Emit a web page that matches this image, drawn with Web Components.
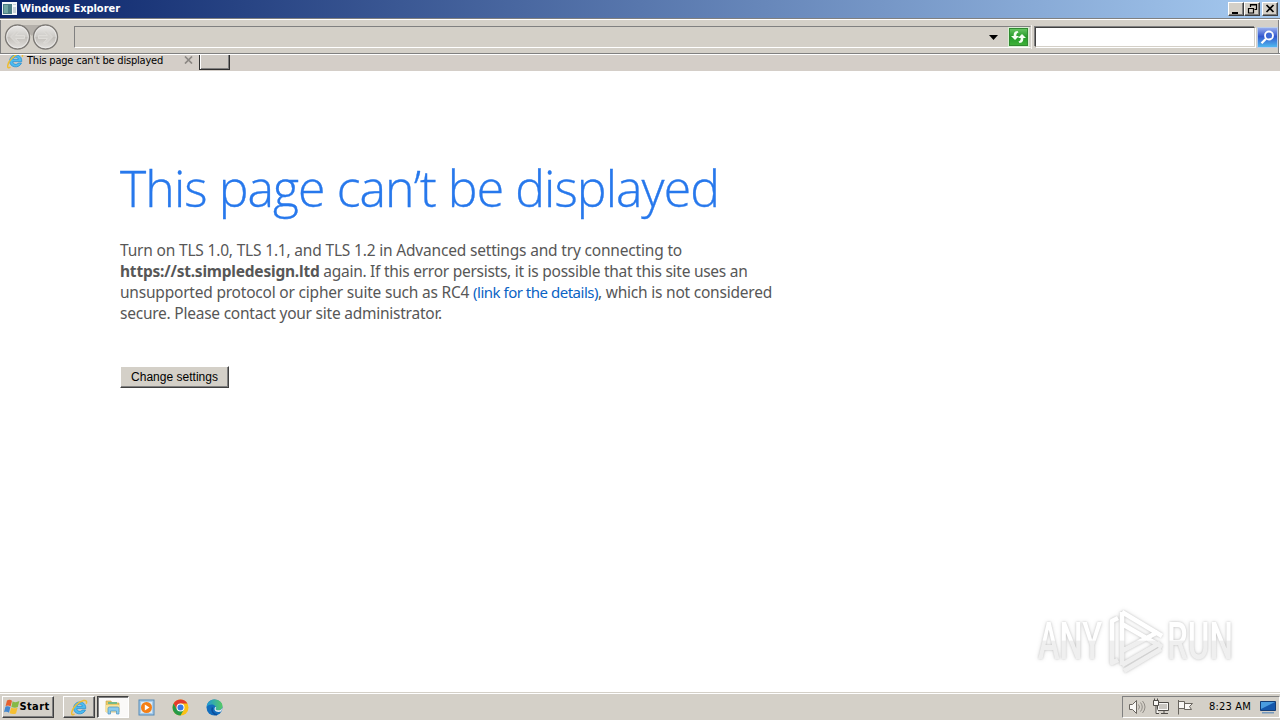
<!DOCTYPE html>
<html lang="en">
<head>
<meta charset="utf-8">
<title>Windows Explorer</title>
<style>
  body {
    margin: 0;
    width: 1280px;
    height: 720px;
    overflow: hidden;
    background: #fff;
    font-family: "DejaVu Sans Condensed", "DejaVu Sans", sans-serif;
  }
</style>
</head>
<body>
<desktop-screen>
  <title-bar slot="top">Windows Explorer</title-bar>
  <nav-bar slot="top"></nav-bar>
  <tab-strip slot="top">This page can't be displayed</tab-strip>
  <error-page></error-page>
  <run-watermark slot="overlay"></run-watermark>
  <task-bar slot="bottom"></task-bar>
</desktop-screen>

<script>
const ieIcon = /*html*/ `
  <svg width="17" height="17" viewBox="0 0 17 17">
    <path d="M14.8 9.600H5.800c.3 3 4 3.700 5.400 1.400h3.300C12 17.200 2.300 15.500 2.600 9 2.900 1 15.200.6 14.800 9.600Z M5.900 7.300h5.400c-.5-2.900-4.800-2.900-5.400 0Z" fill="#4cbcf0" stroke="#2389cf" stroke-width=".7" fill-rule="evenodd"/>
    <path d="M3.500 15.200C-1 17.800.2 11 4.800 6.200 9.600 1.200 17.400-.8 15.200 4.800" fill="none" stroke="#efbd32" stroke-width="1.500"/>
  </svg>`;

class BaseElement extends HTMLElement {
  constructor() {
    super();
    this.attachShadow({ mode: 'open' });
  }

  connectedCallback() {
    const template = document.createElement('template');
    template.innerHTML = `<style>${this.getStyle()}</style>${this.getTemplate()}`;
    this.shadowRoot.replaceChildren(template.content.cloneNode(true));
  }
}

class DesktopScreen extends BaseElement {
  getStyle() {
    return `
      :host { display: flex; flex-direction: column; width: 1280px; height: 720px; position: relative; }
      main { flex: 1; min-height: 0; background: #fff; }
    `;
  }
  getTemplate() {
    return /*html*/ `
      <slot name="top"></slot>
      <main><slot></slot></main>
      <slot name="bottom"></slot>
      <slot name="overlay"></slot>`;
  }
}

// Spreads its text over a fixed width by adjusting the letter spacing
class FitText extends BaseElement {
  getStyle() {
    return `
      :host { display: inline-block; white-space: pre; flex: none; }
      span { display: inline-block; }
    `;
  }
  getTemplate() {
    return '<span><slot></slot></span>';
  }
  connectedCallback() {
    super.connectedCallback();
    const width = Number(this.getAttribute('width'));
    const span = this.shadowRoot.querySelector('span');
    const natural = span.getBoundingClientRect().width;
    const spacing = (width - natural) / this.textContent.length;
    span.style.letterSpacing = `${spacing}px`;
    this.style.width = `${width}px`;
  }
}

class TitleBar extends BaseElement {
  getStyle() {
    return `
      :host {
        display: flex; align-items: center; box-sizing: border-box; flex: none;
        height: 18px; padding: 0 2px; color: #fff;
        font: bold 11px/14px "DejaVu Sans Condensed", sans-serif;
        background: linear-gradient(90deg, #0a246a, #a6caf0);
      }
      .icon { margin: -2px 3px 0 0; }
      fit-text { margin-top: -1px; }
      .buttons { display: flex; margin-left: auto; }
      .buttons svg { display: block; box-sizing: border-box; background: #d4d0c8; border: 1px solid; border-color: #fff #404040 #404040 #fff; box-shadow: inset -1px -1px #808080; }
      .buttons svg:last-child { margin-left: 2px; }
    `;
  }
  getTemplate() {
    return /*html*/ `
      <svg class="icon" width="15" height="13" viewBox="0 0 15 13">
        <path d="M0 0h15v13H0z" fill="#f4f7f8"/>
        <path d="M1 2h9v10H1z" fill="#4d7f86"/>
        <path d="M2 3h4v8H2z" fill="#71a6a1"/>
        <path d="M11 2h3v1h-3zM11 5h3v6h-3z" fill="#c8d2d8"/>
      </svg>
      <fit-text width="100">${this.textContent}</fit-text>
      <div class="buttons">
        <svg width="16" height="14" viewBox="0 0 14 12"><path d="M3 9h6v2H3z"/></svg>
        <svg width="16" height="14" viewBox="0 0 14 12"><path d="M5.500 4V1.500h6v5H9.500M5 2h7M3.500 5.500h5v4.500h-5zM3 5.500h6" fill="none" stroke="#000" stroke-width="1.200"/></svg>
        <svg width="16" height="14" viewBox="0 0 14 12"><path d="M3.500 2l7 7M10.500 2l-7 7" stroke="#000" stroke-width="1.700"/></svg>
      </div>`;
  }
}

class NavBar extends BaseElement {
  getStyle() {
    return `
      :host {
        display: flex; align-items: center; box-sizing: border-box; flex: none;
        height: 37px; padding: 2px 1px 0 4px;
        background: #d4d0c8;
        border-bottom: 1px solid #fff;
        box-shadow: inset 0 1px #808080, inset 0 2px #fff, inset 0 -1px #808080, inset 1px 0 #808080, inset -1px 0 #fff, inset -2px 0 #808080;
      }
      svg { display: block; flex: none; }
      .address {
        display: flex; align-items: center; justify-content: flex-end; box-sizing: border-box; flex: none;
        width: 957px; height: 22px; margin-left: 14px; padding-right: 1px;
        border: 1px solid; border-color: #808080 #d4d0c8 #fff #808080;
      }
      .address .arrow { margin-right: 10px; }
      .divider { width: 1px; height: 24px; background: #f4f2ee; flex: none; }
      .search {
        box-sizing: border-box; flex: none; width: 220px; height: 20px; margin: 0 2px 0 3px;
        background: #fff; border: 1px solid; border-color: #404040 #d4d0c8 #d4d0c8 #404040;
        box-shadow: 1px 1px #fff, -1px -1px #808080;
      }
    `;
  }
  getTemplate() {
    return /*html*/ `
      <svg width="56" height="28" viewBox="0 0 56 28">
        <defs>
          <linearGradient id="ball" x2="0" y2="1">
            <stop stop-color="#ecebe9"/><stop offset=".48" stop-color="#cdcbc7"/>
            <stop offset=".52" stop-color="#c2bfba"/><stop offset="1" stop-color="#e4e2df"/>
          </linearGradient>
        </defs>
        <path d="M15 2h25L28 13z" fill="#b4b0aa"/>
        <g fill="url(#ball)" stroke="#7d7a76" stroke-width="1.400">
          <circle cx="13.500" cy="14" r="12"/><circle cx="41.500" cy="14" r="12"/>
        </g>
        <g fill="none" stroke="#efeeec" stroke-width=".8">
          <circle cx="13.500" cy="14" r="10.800"/><circle cx="41.500" cy="14" r="10.800"/>
        </g>
        <g fill="#d4d2ce" stroke="#dedcd8">
          <path d="M6.500 14l6-6h3l-4 4.500h9v3h-9l4 4.500h-3z"/>
          <path d="M48.500 14l-6-6h-3l4 4.500h-9v3h9l-4 4.500h3z"/>
        </g>
      </svg>
      <div class="address">
        <svg class="arrow" width="9" height="5"><path d="M0 0h9L4.500 5z"/></svg>
        <svg width="21" height="20" viewBox="0 0 21 20">
          <defs><linearGradient id="green" x2="0" y2="1"><stop stop-color="#72cc6b"/><stop offset=".5" stop-color="#239a28"/><stop offset="1" stop-color="#43b63b"/></linearGradient></defs>
          <rect x=".5" y=".5" width="20" height="19" fill="url(#green)" stroke="#d9efd3"/>
          <rect x="1.500" y="1.500" width="18" height="17" fill="none" stroke="#318b31"/>
          <path d="M9.500 4C6 4.200 5.700 6.500 5.700 9H3l4 4 4-4H8.300c0-2 .2-3 2.200-3.500zM11.500 16c3.500-.2 3.800-2.500 3.800-5H18l-4-4-4 4h2.700c0 2-.2 3-2.200 3.500z" fill="#f6fff4"/>
        </svg>
      </div>
      <div class="divider"></div>
      <div class="search"></div>
      <svg width="21" height="21" viewBox="0 0 21 21">
        <defs><linearGradient id="blue" x2="0" y2="1"><stop stop-color="#9bb0ee"/><stop offset=".45" stop-color="#3358cf"/><stop offset="1" stop-color="#51bdf0"/></linearGradient></defs>
        <rect x=".5" y=".5" width="20" height="20" fill="url(#blue)" stroke="#b9cdec"/>
        <path d="M9 11.800L4.500 16.300" stroke="#fff" stroke-width="2.300"/>
        <circle cx="12" cy="8.500" r="4" fill="#3d69d5" stroke="#fff" stroke-width="1.800"/>
      </svg>`;
  }
}

class TabStrip extends BaseElement {
  getStyle() {
    return `
      :host {
        display: flex; align-items: stretch; box-sizing: border-box; flex: none;
        height: 16px; overflow: hidden; background: #d4cec8; color: #000;
        font: 11px/12px "DejaVu Sans Condensed", sans-serif;
      }
      .tab { display: flex; width: 199px; box-sizing: border-box; padding-left: 7px; }
      .tab > svg:first-child { margin: -3px 3px 0 0; flex: none; }
      .close { margin: 1px 0 0 21px; }
      .new { box-sizing: border-box; width: 31px; height: 15px; border: 1px solid #303030; border-top: 0; box-shadow: inset 1px 0 #fff, inset -1px -1px #808080; background: #d0cbc5; }
    `;
  }
  getTemplate() {
    return /*html*/ `
      <div class="tab">
        ${ieIcon}
        <fit-text width="136">${this.textContent}</fit-text>
        <svg class="close" width="9" height="8"><path d="M1 .5l7 7M8 .5l-7 7" stroke="#8b8783" stroke-width="1.700"/></svg>
      </div>
      <div class="new"></div>`;
  }
}

class ErrorPage extends BaseElement {
  getStyle() {
    return `
      :host {
        display: flex; flex-direction: column; align-items: flex-start;
        padding: 83px 0 0 120px;
        font: 15.5px/21px "Noto Sans", "Open Sans", sans-serif; color: #575757;
      }
      h1 { margin: 0; font-size: 50px; line-height: 68px; font-weight: 300; font-family: "Open Sans", sans-serif; color: #2778ec; -webkit-text-stroke: .35px #2778ec; }
      p { margin: 18px 0 0; }
      .line { display: flex; height: 21px; }
      b { font-weight: 700; }
      a { color: #0a63c4; text-decoration: none; font-size: 15px; }
      b, .line > fit-text, a { height: 21px; }
      classic-button { margin-top: 42px; }
    `;
  }
  getTemplate() {
    return /*html*/ `
      <h1><fit-text width="599">This page can’t be displayed</fit-text></h1>
      <p>
        <span class="line"><fit-text width="562">Turn on TLS 1.0, TLS 1.1, and TLS 1.2 in Advanced settings and try connecting to</fit-text></span>
        <span class="line"><b><fit-text width="199.500">https://st.simpledesign.ltd</fit-text></b><fit-text width="428"> again. If this error persists, it is possible that this site uses an</fit-text></span>
        <span class="line"><fit-text width="353">unsupported protocol or cipher suite such as RC4 </fit-text><a><fit-text width="125">(link for the details)</fit-text></a><fit-text width="174">, which is not considered</fit-text></span>
        <span class="line"><fit-text width="322">secure. Please contact your site administrator.</fit-text></span>
      </p>
      <classic-button>Change settings</classic-button>`;
  }
}

class ClassicButton extends BaseElement {
  getStyle() {
    return `
      :host {
        display: flex; align-items: center; justify-content: center; box-sizing: border-box;
        width: 109px; height: 22px; background: #d4d0c8; color: #000;
        border: 1px solid; border-color: #fff #404040 #404040 #fff;
        box-shadow: inset -1px -1px #808080;
        font: 12px "Liberation Sans", Arial, sans-serif;
      }
    `;
  }
  getTemplate() {
    return `<fit-text width="87">${this.textContent}</fit-text>`;
  }
}

class RunWatermark extends BaseElement {
  getStyle() {
    return `
      :host { display: block; position: absolute; left: 1030px; top: 601px; }
      svg { display: block; overflow: visible; filter: drop-shadow(0 0 1px rgba(0, 0, 0, .16)) drop-shadow(0 0 2px rgba(0, 0, 0, .13)); }
      text { font: 500 52px Roboto, sans-serif; }
    `;
  }
  getTemplate() {
    return /*html*/ `
      <svg width="240" height="80" viewBox="0 0 240 80">
        <defs>
          <linearGradient id="shine" gradientUnits="userSpaceOnUse" x1="0" y1="0" x2="0" y2="80">
            <stop offset=".49" stop-color="#fff"/><stop offset=".5" stop-color="#efefef"/>
          </linearGradient>
        </defs>
        <g fill="url(#shine)">
          <text x="8" y="58" textLength="64" lengthAdjust="spacingAndGlyphs">ANY</text>
          <text x="137" y="58" textLength="66" lengthAdjust="spacingAndGlyphs">RUN</text>
        </g>
        <g fill="none" stroke="url(#shine)" stroke-width="4.500" stroke-linejoin="round">
          <path d="M92 11v53M92 11l40 24M92 23l40 23M92 50l36-19"/>
          <path d="M88 17l-6 3v42l6-3M92 64l38-22M94 70l37-22"/>
        </g>
      </svg>`;
  }
}

class TaskBar extends BaseElement {
  getStyle() {
    return `
      :host {
        display: flex; box-sizing: border-box; flex: none; height: 28px; padding: 3px 0 2px 2px;
        background: #d4d0c8; border-top: 1px solid #d4d0c8; box-shadow: inset 0 1px #fff;
        color: #000; font: 11px/20px "DejaVu Sans Condensed", sans-serif;
      }
      svg { display: block; flex: none; }
      .button {
        display: flex; align-items: center; justify-content: center; box-sizing: border-box; flex: none;
        width: 32px; height: 22px; border: 1px solid; border-color: #fff #404040 #404040 #fff;
        box-shadow: inset -1px -1px #808080;
      }
      .start { width: 52px; font-weight: bold; padding-right: 3px; }
      .start fit-text { height: 20px; line-height: 19px; }
      .pressed { border-color: #404040 #fff #fff #404040; box-shadow: inset 1px 1px #808080; background: #faf9f8; }
      .apps { display: flex; gap: 2px; margin-left: 9px; }
      .plain { display: flex; align-items: center; height: 22px; gap: 17px; margin-left: 9px; }
      .tray {
        display: flex; align-items: center; box-sizing: border-box; height: 22px; width: 158px;
        margin-left: auto; padding-left: 5px; border: 1px solid; border-color: #808080 #fff #fff #808080;
      }
      .tray fit-text { margin: 0 9px 0 12px; height: 20px; }
    `;
  }
  getTemplate() {
    return /*html*/ `
      <div class="button start">
        <svg width="16" height="16" viewBox="0 0 16 16">
          <path d="M3 1.500C5 .3 6.500.7 8 1.800L6.600 7.500C5 6.400 3.500 6.300 1.600 7.100z" fill="#e5602e"/>
          <path d="M8.600 2.300c1.800 1.200 4 1.200 6.800-.2l-1.600 6c-2 .9-4.200.8-6.400-.2z" fill="#86b945"/>
          <path d="M1.400 7.700c1.900-.8 3.500-.6 5 .4L5 13.700C3.500 12.700 2 12.500 0 13.300z" fill="#4488cf"/>
          <path d="M7.200 8.500c2 1.100 4 1.100 6.400.2L12 14.400c-2 .9-4.100.8-6.400-.2z" fill="#f5bf31"/>
        </svg>
        <fit-text width="30">Start</fit-text>
      </div>
      <div class="apps">
        <div class="button">${ieIcon}</div>
        <div class="button pressed">
          <svg width="16" height="16" viewBox="0 0 16 16">
            <path d="M1 2h5l1 2h7v9H1z" fill="#eac967" stroke="#c6a13f" stroke-width=".6"/>
            <path d="M3 3h9v2H3z" fill="#75b987"/>
            <path d="M.5 6h14v7H.5z" fill="#f7e39c"/>
            <path d="M3 15V9.500Q3 8 4.500 8h8Q14 8 14 9.500V15h-2.500v-3h-6v3z" fill="#8acbed" stroke="#4b94c2" stroke-width=".7"/>
          </svg>
        </div>
      </div>
      <div class="plain">
        <svg width="17" height="17" viewBox="0 0 17 17">
          <rect x="1" y="1" width="15" height="15" fill="#a7cceb" stroke="#5489b6"/>
          <rect x="3" y="3" width="11" height="11" fill="#dcebf5"/>
          <circle cx="8.500" cy="8.500" r="5.500" fill="#f47f16"/>
          <path d="M6.800 5.500v6l4.700-3z" fill="#fff"/>
        </svg>
        <svg width="17" height="17" viewBox="0 0 17 17">
          <circle cx="8.500" cy="8.500" r="8" fill="#fbc116"/>
          <path d="M1.600 4.500A8 8 0 0 1 15.400 4.500H8.500L5 10.500z" fill="#e33b2e"/>
          <path d="M1.600 4.500A8 8 0 0 0 8.500 16.500L12 10.500H5z" fill="#259a48"/>
          <circle cx="8.500" cy="8.500" r="4" fill="#fff"/><circle cx="8.500" cy="8.500" r="3" fill="#3879e5"/>
        </svg>
        <svg width="17" height="17" viewBox="0 0 17 17">
          <defs><linearGradient id="edge"><stop stop-color="#2098d7"/><stop offset="1" stop-color="#55ca65"/></linearGradient></defs>
          <circle cx="8.500" cy="8.500" r="8" fill="#126dbd"/>
          <path d="M.6 8C1 3 4.500.5 8.500.5c4.700 0 8 3 8 6.500 0 3-2.500 4.500-5 4.500-2 0-2.600-.8-1.600-2C11 5.800 4 3.500.6 8z" fill="url(#edge)"/>
          <path d="M9.300 7.800c-2.200 2.800.4 6.500 6 4.700l1.200-4c-1 2.600-3.500 3.100-5.600 2.700-1.500-.4-1.500-1.500-.7-2.400z" fill="#e7eef2"/>
          <path d="M6.500 8.500c-1.500 3 .5 7 4.500 7.300" fill="none" stroke="#0b4d9c" stroke-width="1.500"/>
        </svg>
      </div>
      <div class="tray">
        <svg width="69" height="18" viewBox="0 0 69 18" fill="#f8f7f5" stroke="#69655f">
          <path d="M1.500 6.500h3l4-4v13l-4-4h-3z"/>
          <path d="M10.500 6.500q2 2.500 0 5M12.500 4.500q3.500 4.500 0 9M14.500 3q5 6 0 12" fill="none" stroke="#918d87"/>
          <path d="M29.500 4.500h11v8h-11zM33 15.500h7M36 13v2" stroke="#4f4c48"/>
          <path d="M31 6h8v5h-8z" fill="#c9c6c1" stroke="none"/>
          <path d="M25.500 2.500h5v5h-5zM26.500.5v2M29.500.5v2M28 8v7.500h3" stroke="#4f4c48"/>
          <path d="M50.500 2v14.500M50.500 3.500h6v7h-6M56.500 5.500h8l-3 3 2 3h-7z"/>
        </svg>
        <fit-text width="42">8:23 AM</fit-text>
        <svg width="16" height="14" viewBox="0 0 16 14">
          <path d="M.5 1.500h15v9H.5z" fill="#1557ac" stroke="#143d76"/>
          <path d="M1 2h14L1 9z" fill="#4a9ce0"/><path d="M2 12h12v1.500H2z" fill="#7599bd"/>
        </svg>
      </div>`;
  }
}

customElements.define('fit-text', FitText);
customElements.define('classic-button', ClassicButton);
customElements.define('desktop-screen', DesktopScreen);
customElements.define('title-bar', TitleBar);
customElements.define('nav-bar', NavBar);
customElements.define('tab-strip', TabStrip);
customElements.define('error-page', ErrorPage);
customElements.define('run-watermark', RunWatermark);
customElements.define('task-bar', TaskBar);
</script>
</body>
</html>
